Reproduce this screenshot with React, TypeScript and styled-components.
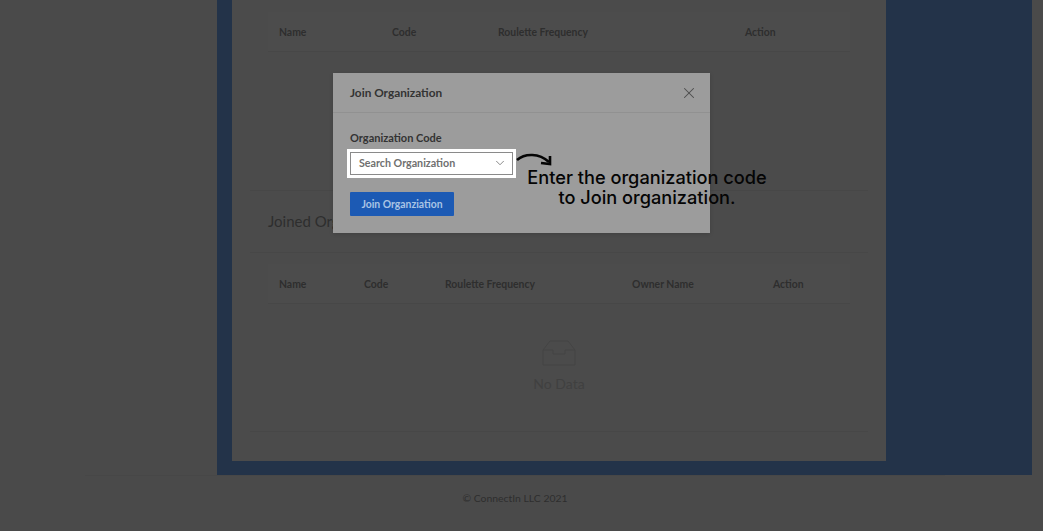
import React from 'react';
import styled, { createGlobalStyle } from 'styled-components';
import { ChevronDown, X } from 'lucide-react';

const colors = {
  page: '#4a4a4a',
  blue: '#233349',
  panel: '#4b4b4b',
  line: '#474747',
  text: '#2e2e2e',
  faint: '#404040',
  modal: '#9c9c9c',
  modalLine: '#919191',
  modalText: '#333333',
  button: '#1c5ab4',
  buttonText: '#a9c4e4',
};

const GlobalStyle = createGlobalStyle`
  html, body {
    margin: 0;
    padding: 0;
    background: ${colors.page};
    font-family: Lato, "Open Sans", sans-serif;
  }
`;

const Page = styled.div`
  position: relative;
  width: 1043px;
  height: 531px;
  overflow: hidden;
  background: ${colors.page};
`;

const BlueBand = styled.main`
  box-sizing: border-box;
  width: 815px;
  height: 475px;
  margin-left: 217px;
  padding: 0 146px 14px 15px;
  background: ${colors.blue};
`;

const Panel = styled.div`
  box-sizing: border-box;
  height: 100%;
  padding: 12px 18px 0;
  background: ${colors.panel};
  display: flex;
  flex-direction: column;
`;

const TableHead = styled.div<{ $cols: string }>`
  box-sizing: border-box;
  height: 40px;
  margin: 0 18px;
  padding-left: 11px;
  display: grid;
  grid-template-columns: ${(p) => p.$cols};
  align-items: center;
  background: #4c4c4c;
  border-bottom: 1px solid ${colors.line};
  font-size: 10.4px;
  font-weight: 700;
  color: ${colors.text};
`;

const OwnedBlock = styled.section`
  height: 178px;
  border-bottom: 1px solid ${colors.line};
`;

const JoinedCard = styled.section`
  height: 240px;
  border-bottom: 1px solid ${colors.line};
`;

const CardHeader = styled.div`
  box-sizing: border-box;
  height: 62px;
  padding: 21px 18px 0;
  border-bottom: 1px solid ${colors.line};
  font-size: 15px;
  color: ${colors.text};
  margin-bottom: 11px;
`;

const Empty = styled.div`
  display: flex;
  flex-direction: column;
  align-items: center;
  padding-top: 36px;
  gap: 9px;
  font-size: 14px;
  color: ${colors.faint};
`;

const Footer = styled.footer`
  margin-left: 85px;
  width: 860px;
  border-top: 1px solid ${colors.line};
  padding-top: 15px;
  text-align: center;
  font-size: 10.4px;
  line-height: 14px;
  color: ${colors.text};
`;

const Modal = styled.div`
  position: absolute;
  left: 333px;
  top: 73px;
  width: 377px;
  height: 160px;
  background: ${colors.modal};
  box-shadow: 0 1px 4px rgba(0, 0, 0, 0.15);
`;

const ModalHeader = styled.div`
  box-sizing: border-box;
  height: 40px;
  padding: 0 12px 0 17px;
  display: flex;
  align-items: center;
  justify-content: space-between;
  border-bottom: 1px solid ${colors.modalLine};
  font-size: 11.8px;
  font-weight: 700;
  color: ${colors.modalText};
`;

const ModalBody = styled.div`
  padding: 18px 17px 0;
  display: flex;
  flex-direction: column;
  align-items: flex-start;
`;

const FieldLabel = styled.label`
  font-size: 11px;
  font-weight: 700;
  line-height: 13px;
  color: ${colors.modalText};
  margin-bottom: 8px;
`;

const SelectBox = styled.div`
  box-sizing: border-box;
  width: 163px;
  height: 23px;
  padding: 0 5px 2px 8px;
  display: flex;
  align-items: center;
  justify-content: space-between;
  background: #ffffff;
  border: 1px solid #8a8a8a;
  box-shadow: 0 0 0 3px #ffffff;
  font-size: 10.7px;
  font-weight: 700;
  color: #6f6f6f;
`;

const JoinButton = styled.button`
  margin-top: 17px;
  width: 104px;
  height: 24px;
  padding: 0 0 1px;
  border: none;
  border-radius: 1px;
  background: ${colors.button};
  color: ${colors.buttonText};
  font-family: inherit;
  font-size: 10.4px;
  font-weight: 700;
`;

const Callout = styled.div`
  position: absolute;
  left: 507px;
  top: 167px;
  width: 280px;
  text-align: center;
  font-family: Inter, sans-serif;
  font-size: 18.2px;
  font-weight: 500;
  line-height: 20px;
  color: #050505;
`;

const ArrowMark = styled.svg`
  position: absolute;
  left: 515px;
  top: 150px;
`;

const firstCols = '113px 106px 247px 1fr';
const secondCols = '85px 81px 187px 141px 1fr';

const App: React.FC = () => (
  <Page>
    <GlobalStyle />
    <BlueBand>
      <Panel>
        <OwnedBlock>
          <TableHead $cols={firstCols}>
            <span>Name</span>
            <span>Code</span>
            <span>Roulette Frequency</span>
            <span>Action</span>
          </TableHead>
        </OwnedBlock>
        <JoinedCard>
          <CardHeader>Joined Organization</CardHeader>
          <TableHead $cols={secondCols}>
            <span>Name</span>
            <span>Code</span>
            <span>Roulette Frequency</span>
            <span>Owner Name</span>
            <span>Action</span>
          </TableHead>
          <Empty>
            <svg width="34" height="26" viewBox="0 0 34 26" fill="none" stroke="#444444" strokeWidth="1">
              <path d="M1 10 L8 1 H26 L33 10 V25 H1 Z" />
              <path d="M1 10 H11 V14 H23 V10 H33" />
            </svg>
            No Data
          </Empty>
        </JoinedCard>
      </Panel>
    </BlueBand>
    <Footer>© ConnectIn LLC 2021</Footer>

    <Modal>
      <ModalHeader>
        Join Organization
        <X size={18} color="#4d4d4d" strokeWidth={1.4} />
      </ModalHeader>
      <ModalBody>
        <FieldLabel>Organization Code</FieldLabel>
        <SelectBox>
          Search Organization
          <ChevronDown size={14} color="#6f6f6f" strokeWidth={1.4} />
        </SelectBox>
        <JoinButton>Join Organziation</JoinButton>
      </ModalBody>
    </Modal>

    <ArrowMark width="38" height="18" viewBox="0 0 38 18" fill="none" stroke="#050505" strokeWidth="2.6">
      <path d="M2 10 C10 3 24 3 34 12" />
      <path d="M26 13 L35 14 L35 6" />
    </ArrowMark>
    <Callout>
      Enter the organization code
      <br />
      to Join organization.
    </Callout>
  </Page>
);

export default App;
